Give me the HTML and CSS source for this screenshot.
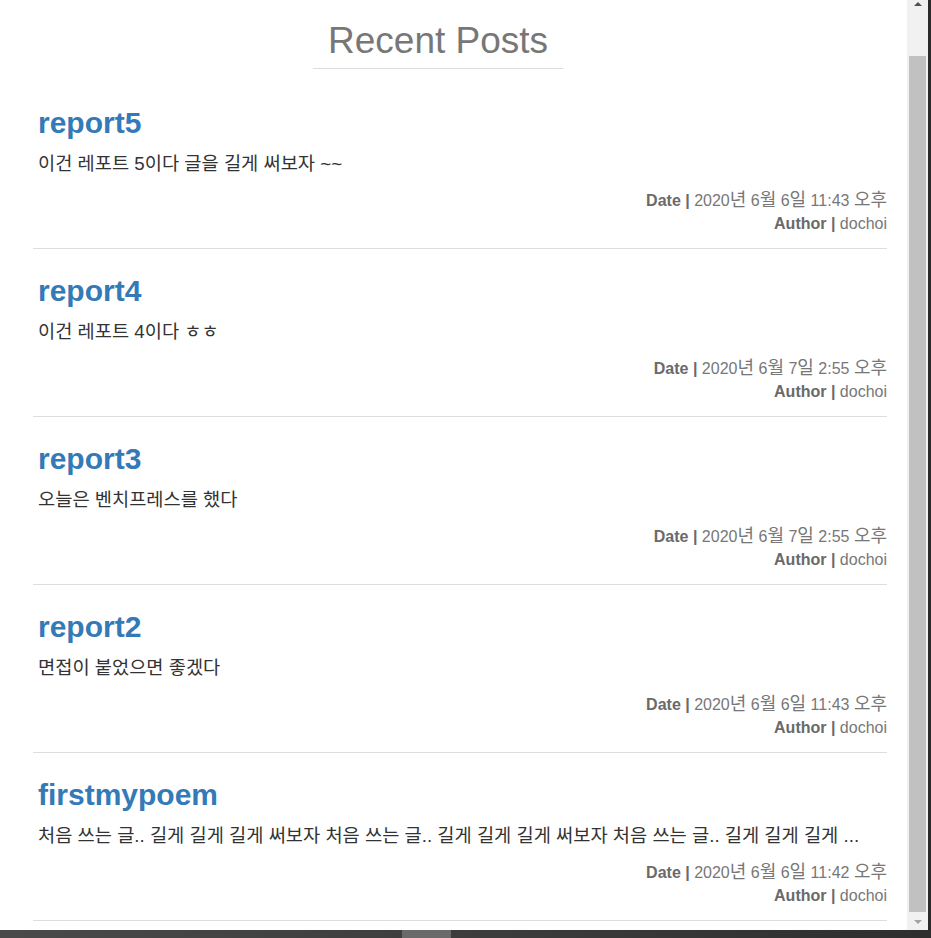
FILE: index.html
```html
<!DOCTYPE html>
<html lang="ko">
<head>
<meta charset="utf-8">
<title>Recent Posts</title>
<link rel="stylesheet" href="styles.css">
</head>
<body>
<div class="window">
  <div class="frame">
    <main class="page">
      <div class="heading-wrap">
        <h1 class="section-title">Recent Posts</h1>
      </div>
      <article class="post">
        <h2 class="post-title"><a href="#">report5</a></h2>
        <p class="post-body">이건 레포트 5이다 글을 길게 써보자 ~~</p>
        <div class="meta"><b>Date |</b> 2020<span class="ko">년</span> 6<span class="ko">월</span> 6<span class="ko">일</span> 11:43 <span class="ko">오후</span></div>
        <div class="meta"><b>Author |</b> dochoi</div>
      </article>
      <article class="post">
        <h2 class="post-title"><a href="#">report4</a></h2>
        <p class="post-body">이건 레포트 4이다 ㅎㅎ</p>
        <div class="meta"><b>Date |</b> 2020<span class="ko">년</span> 6<span class="ko">월</span> 7<span class="ko">일</span> 2:55 <span class="ko">오후</span></div>
        <div class="meta"><b>Author |</b> dochoi</div>
      </article>
      <article class="post">
        <h2 class="post-title"><a href="#">report3</a></h2>
        <p class="post-body">오늘은 벤치프레스를 했다</p>
        <div class="meta"><b>Date |</b> 2020<span class="ko">년</span> 6<span class="ko">월</span> 7<span class="ko">일</span> 2:55 <span class="ko">오후</span></div>
        <div class="meta"><b>Author |</b> dochoi</div>
      </article>
      <article class="post">
        <h2 class="post-title"><a href="#">report2</a></h2>
        <p class="post-body">면접이 붙었으면 좋겠다</p>
        <div class="meta"><b>Date |</b> 2020<span class="ko">년</span> 6<span class="ko">월</span> 6<span class="ko">일</span> 11:43 <span class="ko">오후</span></div>
        <div class="meta"><b>Author |</b> dochoi</div>
      </article>
      <article class="post">
        <h2 class="post-title"><a href="#">firstmypoem</a></h2>
        <p class="post-body clip">처음 쓰는 글.. 길게 길게 길게 써보자 처음 쓰는 글.. 길게 길게 길게 써보자 처음 쓰는 글.. 길게 길게 길게 ...</p>
        <div class="meta"><b>Date |</b> 2020<span class="ko">년</span> 6<span class="ko">월</span> 6<span class="ko">일</span> 11:42 <span class="ko">오후</span></div>
        <div class="meta"><b>Author |</b> dochoi</div>
      </article>
    </main>
    <div class="scrollbar">
      <div class="arrow up"></div>
      <div class="track"><div class="thumb"></div></div>
      <div class="arrow down"></div>
    </div>
    <div class="edge"></div>
  </div>
  <div class="bottombar"><div class="bottom-thumb"></div></div>
</div>
</body>
</html>
```

FILE: styles.css
```css
html, body {
  margin: 0;
  padding: 0;
  background: #fff;
}
body {
  font-family: "Liberation Sans", Arial, "Noto Sans CJK KR", sans-serif;
  font-size: 16px;
  line-height: 23px;
  color: #333;
}
.window {
  width: 931px;
  height: 938px;
  display: flex;
  flex-direction: column;
  overflow: hidden;
}
.frame {
  flex: 1;
  display: flex;
  min-height: 0;
}
.page {
  flex: 1;
  min-width: 0;
  padding: 21px 20px 0 38px;
  overflow: hidden;
}
.heading-wrap {
  padding-left: 275px;
}
.section-title {
  display: inline-block;
  margin: 0;
  padding: 0 15px 7px;
  font-size: 37px;
  line-height: 40px;
  font-weight: normal;
  color: #777;
  border-bottom: 1px solid #ddd;
}
.post {
  border-bottom: 1px solid #ddd;
  margin-left: -5px;
  padding: 0 0 13px 5px;
}
.heading-wrap + .post {
  margin-top: 37px;
}
.post + .post {
  padding-top: 25px;
}
.post-title {
  margin: 0 0 13px;
  font-size: 30px;
  line-height: 33px;
  font-weight: bold;
}
.post-title a {
  color: #337ab7;
  text-decoration: none;
}
.post-body {
  margin: 0 0 14px;
  font-family: "Liberation Sans", "Noto Sans CJK KR", sans-serif;
  font-size: 18.7px;
  line-height: 23px;
  color: #333;
}
.clip {
  white-space: nowrap;
  overflow: hidden;
  padding-right: 10px;
}
.meta {
  text-align: right;
  color: #777;
}
.meta b {
  color: #6a6a6a;
}
.ko {
  font-size: 18px;
  line-height: 16px;
}
.scrollbar {
  width: 21px;
  background: #f1f1f1;
  display: flex;
  flex-direction: column;
}
.arrow {
  height: 17px;
  display: flex;
  justify-content: center;
}
.arrow.up::before {
  content: "";
  margin-top: 2px;
  border-left: 4px solid transparent;
  border-right: 4px solid transparent;
  border-bottom: 4px solid #505050;
  height: 0;
}
.arrow.down::before {
  content: "";
  margin-top: 7px;
  border-left: 4px solid transparent;
  border-right: 4px solid transparent;
  border-top: 4px solid #a3a3a3;
  height: 0;
}
.track {
  flex: 1;
  padding: 39px 2px 1px;
  display: flex;
}
.thumb {
  flex: 1;
  background: #c1c1c1;
}
.edge {
  width: 3px;
  background: #2b2b2b;
}
.bottombar {
  height: 8px;
  background: linear-gradient(to right, #4a4a4a, #3a3a3a 60%, #2e2e2e);
  padding-left: 402px;
}
.bottom-thumb {
  width: 49px;
  height: 8px;
  background: #6a6a6a;
}
```
